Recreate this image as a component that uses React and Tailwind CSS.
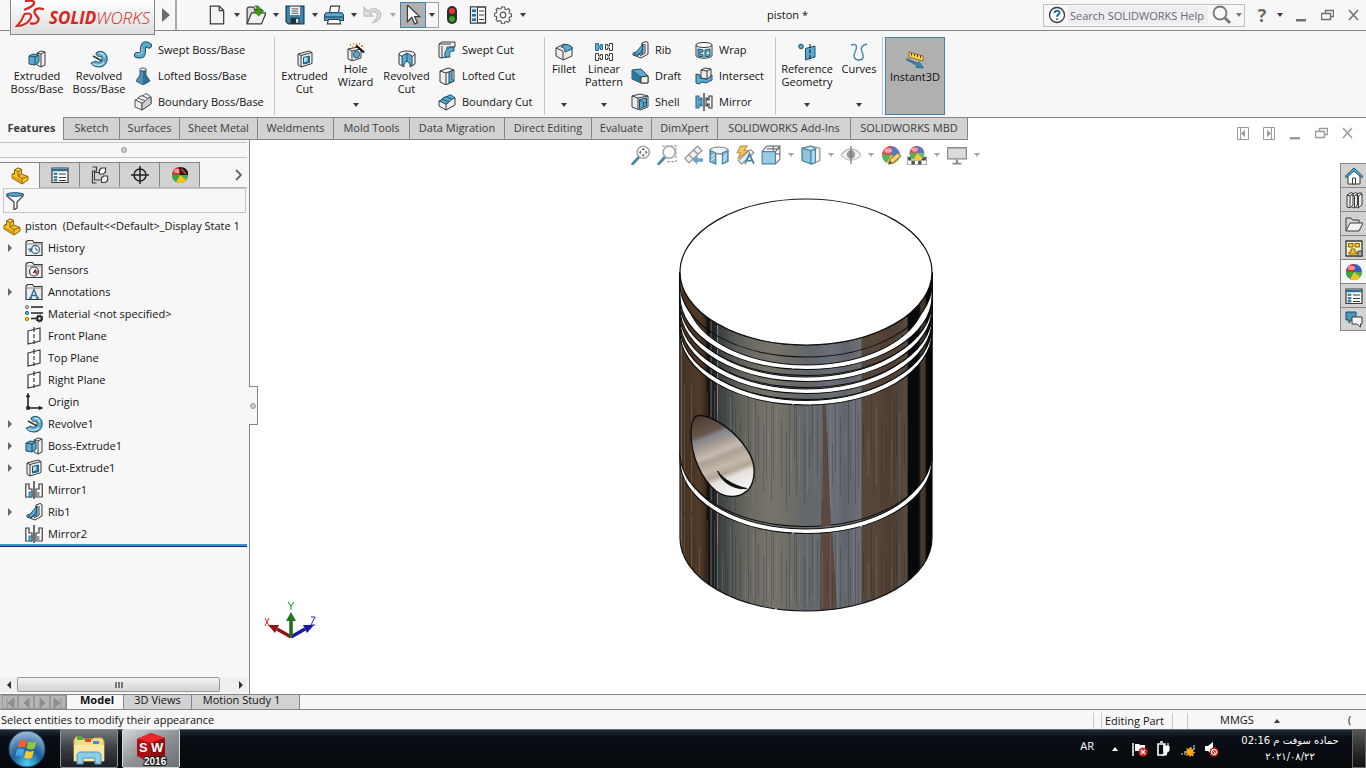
import React from "react";

const K = "#3a3a3a";
const B = "#5fa9cc";
const D = "#2a7196";

const cube = (
  <g stroke={K} strokeWidth="1" strokeLinejoin="round">
    <path d="M9 3l4-2 4 1v13l-4 2-4-2z" fill="#f2f2f2" />
    <path d="M13 4v13M13 4l4-2M13 4L9 3" fill="none" />
    <path d="M1 6l4-2 6 1v7l-4 3-6-1z" fill={B} stroke="#17506e" />
    <path d="M1 6l6 1v8M7 7l4-2" fill="none" stroke="#17506e" />
  </g>
);

const folder = (
  <g>
    <path d="M1 16.500V3l1.500-1.500h5L9 3.500h8v13z" fill="#ececec" stroke={K} strokeWidth="1.200" />
    <path d="M1 5h16" stroke="#888" />
  </g>
);

const sphere = (
  <g>
    <circle cx="9" cy="9" r="8" fill="#3a5fc0" />
    <path d="M9 9L9.5 1A8 8 0 0 0 1 8.5z" fill="#e02a26" />
    <path d="M9 9L1 8.500A8 8 0 0 0 5 16z" fill="#3aa63c" />
    <path d="M9 9l-4 7a8 8 0 0 0 10.500-2.300L17 9z" fill="#f3c31d" />
    <path d="M9 9h8a8 8 0 0 1-2 5z" fill="#4fae45" />
    <ellipse cx="6.500" cy="5" rx="3.500" ry="2.200" fill="#fff" opacity=".5" />
  </g>
);

const mirror = (
  <g fill="none" stroke={K} strokeWidth="1.200">
    <path d="M.8 3H4v5h3v8H.8z" fill="#fff" />
    <path d="M17.200 3H14v5h-3v8h6.200z" fill="#fff" />
    <path d="M4 11h3v5H4z" fill={B} stroke={D} strokeWidth="1" />
    <path d="M11.500 11h3v4.500h-3z" fill="#999" stroke="none" />
    <path d="M9 0v18" stroke="#111" />
  </g>
);

const mirrorCmd = (
  <g stroke={K} strokeWidth="1.100">
    <path d="M1 3h3v4h1.500V5H7v8H5.500v-2H4v4H1z" fill={B} stroke={D} />
    <path d="M17 3h-3v4h-1.500V5H11v8h1.500v-2H14v4h3z" fill="#eee" />
    <path d="M9 0v18" stroke="#111" />
  </g>
);

const rib = (
  <g strokeLinejoin="round">
    <path d="M11 2l4-1.500 2 1V13l-7 4-8-3v-2l8-2z" fill="#f0f0f0" stroke={K} />
    <path d="M14 3v9l-5 3" fill="none" stroke={K} />
    <path d="M12 3v9l-6 2.500-3-1z" fill={B} stroke="#17506e" />
    <path d="M12 3l-1 7-5 4.500" fill="none" stroke="#17506e" />
  </g>
);

const cutBox = (
  <g stroke={K} strokeLinejoin="round">
    <path d="M2 4l11-3 3 1.500v11L5 17l-3-2z" fill="#eee" />
    <path d="M5 5.500l11-3M5 5.500V17M2 4l3 1.500" fill="none" />
    <path d="M7.500 7.500l6-1.500v6.500l-6 1.500z" fill="#b9dcec" stroke="#17506e" />
    <path d="M11.500 6.500v4.500l-4 1.500 0 1.500 6-1.500V6z" fill={D} stroke="none" />
  </g>
);

const revolve = (
  <g strokeLinejoin="round">
    <path d="M6 3C10-.5 16 2 17 7c1 5-2 10-8 10-4 0-7-2-8-4l5-2c1 1 3 2 5 0 1.500-1.500 1-4 0-5-1.500 1.500-5 0-5-3z" fill={B} stroke="#17506e" />
    <path d="M9 3.500c3-1 5.500 1 5.500 4M3 13.500c3 2.500 8 2.500 11-1" fill="none" stroke="#c3e3f1" strokeWidth="1.300" />
    <path d="M3 6l9 5" stroke={K} strokeWidth="1.500" />
  </g>
);

const list = (
  <g stroke={K} fill="none">
    <path d="M1 2h16v14.500H1z" fill="#fafafa" strokeWidth="1.200" />
    <path d="M1 4h16" stroke={D} strokeWidth="2.500" />
    <path d="M3 7h3v1.500H3zM3 10.500h3V12H3zM3 13.500h3V15H3z" fill={B} stroke={D} strokeWidth=".8" />
    <path d="M8 8h7M8 11.500h7M8 14.500h7" strokeWidth="1.200" />
  </g>
);

const part = (
  <g strokeLinejoin="round" stroke="#8a6200">
    <path d="M3.500 3L7 1l3.500 1.500V7L17 9.500V13l-6 4L1 11V7.500L3.500 6z" fill="#f6c52c" />
    <path d="M3.500 3L7 1l3.500 1.500L7 4.500z" fill="#ffe27a" />
    <path d="M7 4.500V9l4 2.500L17 9.500M3.500 6v1L1 7.500M10.500 7L7 9M11 11.500V17" fill="none" />
    <path d="M1.500 8.500L10.500 13v3.200L1.500 10.800z" fill="#dca018" stroke="none" />
  </g>
);

const plane = (
  <g fill="none" stroke={K} strokeWidth="1.200">
    <path d="M3 4l12-3v13L3 17z" fill="#fff" />
    <path d="M9 0v5M9 7v4M9 13v4" />
  </g>
);

const magnifier = (
  <g>
    <path d="M7 11l-5.500 6" stroke={D} strokeWidth="2.600" strokeLinecap="round" />
    <circle cx="11" cy="6.500" r="5.500" fill="#f4f8fa" stroke="#8b9499" strokeWidth="1.300" />
  </g>
);

const I = {
  cube, mirror, mirrorCmd, rib, cutBox, revolve, list, part, plane, sphere,
  newDoc: (<path d="M3 1h8l4 4v12H3zM11 1v4h4" fill="#f4f4f4" stroke={K} strokeWidth="1.100" />),
  open: (
    <g strokeLinejoin="round">
      <path d="M1 17V3l1-1h5l1 2h6v4" fill="#ddd" stroke={K} strokeWidth="1.100" />
      <path d="M1 17L5 7h13l-4 10z" fill="#f0f0f0" stroke={K} strokeWidth="1.100" />
      <path d="M8 1c3-1 5 1 5 4h3l-4.500 5L7 5h3c0-2-.5-3-2-4z" fill="#3f9c12" stroke="#2b7508" strokeWidth=".6" />
    </g>
  ),
  save: (
    <g>
      <path d="M1 1h16v16H3l-2-2z" fill="#3c86ad" stroke="#1d4359" strokeWidth="1.200" />
      <path d="M4.500 1.500h9V9h-9z" fill="#f4f4f4" />
      <path d="M6 3.500h6M6 5.500h6M6 7.500h6" stroke="#777" />
      <path d="M5 11.500h8V17H5z" fill="#26323a" />
      <path d="M10 12.500h2V16h-2z" fill="#eee" />
    </g>
  ),
  print: (
    <g>
      <path d="M5 7L6 1h8l-1 6z" fill="#fff" stroke={K} />
      <path d="M2 7h14l1.500 2v5H.5V9z" fill="#5fa9cc" stroke="#1d4f69" />
      <path d="M1 10h16v2H1z" fill="#2a6a8c" />
      <path d="M4 13h10l1 4H3z" fill="#fff" stroke={K} />
    </g>
  ),
  undo: (<path d="M1 2v8h8L6 7c4-2.500 9 0 6 5l-3 4c7-2 9-8 5-11-3-2.500-7-2-10 .5z" fill="#dedede" stroke="#bdbdbd" />),
  cursor: (<path d="M4 0v15l4-4 2.500 6 2.500-1-2.500-5.500H15z" fill="#fff" stroke={K} strokeWidth="1.100" />),
  traffic: (
    <g>
      <rect x="4" y="0" width="10" height="18" rx="5" fill="#2d2d2d" />
      <circle cx="9" cy="5" r="3" fill="#e23b2b" />
      <circle cx="9" cy="13" r="3" fill="#38a328" />
    </g>
  ),
  options: (
    <g>
      <path d="M1.500 1h15v16h-15z" fill="#fff" stroke={K} strokeWidth="1.300" />
      <path d="M2 1.500h6.500v15H2z" fill="#d7e8f0" />
      <path d="M3 3.500h4v2.500H3zM3 8h4v2.500H3zM3 12.500h4V15H3z" fill={D} />
      <path d="M8.500 1v16M10 5h5M10 9h5M10 13.500h5" stroke={K} />
    </g>
  ),
  gear: (
    <g fill="none" stroke="#555">
      <path d="M7.500 1h3l.5 2 1.600.7L14.500 2.500l1.500 2-1 1.700.6 1.300 1.900.5v2.500l-2 .6-.6 1.500 1.100 1.800-1.800 1.900-1.900-1-1.400.6-.6 2H7.600L7 15.200l-1.500-.6-1.800 1L2 13.700l1-1.700-.6-1.500-2-.5V7.500l2-.6L3 5.400 2 3.600 3.800 2l1.700 1L7 2.700z" strokeWidth="1.100" />
      <circle cx="9" cy="9" r="2.800" strokeWidth="1.200" />
    </g>
  ),
  sweep: (
    <g fill="none" strokeLinecap="round">
      <path d="M3 14c7 2 6-2 6-6s2-6 6-3.500" stroke="#17506e" strokeWidth="6" />
      <path d="M3 14c7 2 6-2 6-6s2-6 6-3.500" stroke={B} strokeWidth="4.200" />
      <path d="M3 13c4 1 5-1 5-5" stroke="#a6d4e8" strokeWidth="1.200" />
    </g>
  ),
  loft: (
    <g stroke="#3d5666">
      <path d="M6 2v6L2 14l7 4 7-4-4-6V2z" fill="#4c93b8" />
      <path d="M9 3v15l7-4-4-6V2z" fill="#2f6f92" stroke="none" />
      <ellipse cx="9" cy="2.500" rx="3" ry="1.500" fill="#fff" />
    </g>
  ),
  boundary: (
    <g stroke="#555" fill="#ececec" strokeLinejoin="round">
      <path d="M1 7c3 0 3-4 6-4s4-3 6-2l4 3v7l-9 6-7-3z" />
      <path d="M1 7l7 3c3 0 3-4 9-6M8 10v7M4 5l7 3M8 2.500l6 3" fill="none" />
      <path d="M8 10c3 0 3-4 9-6v7l-9 6z" fill="#cfcfcf" />
    </g>
  ),
  boundaryCut: (
    <g strokeLinejoin="round">
      <path d="M1 8v5l7 4 9-5V5z" fill="#eee" stroke={K} />
      <path d="M1 8c3 0 3-4 6-4s4-3 6-2l4 3c-5 1-6 6-9 6z" fill={B} stroke="#17506e" />
      <path d="M4 6l7 3M8 3.500l6 3" stroke="#17506e" fill="none" />
      <path d="M8 11v6" stroke={K} />
    </g>
  ),
  hole: (
    <g strokeLinejoin="round">
      <path d="M1 6l10-2 3 2v9l-9 3-4-2z" fill="#eee" stroke={K} />
      <path d="M1 6l4 2v10M5 8l9-2" stroke={K} fill="none" />
      <ellipse cx="9.500" cy="11.500" rx="3" ry="3.500" fill={B} stroke="#17506e" />
      <path d="M9 2.500l8 7" stroke="#111" strokeWidth="2.200" />
      <path d="M3 2h1M6 0.500h1M9 1h1M12 0.500h1M14 3h2M5 4h1" stroke="#e8891c" strokeWidth="1.800" />
    </g>
  ),
  revCut: (
    <g stroke={K} strokeLinejoin="round">
      <path d="M1 4v10l5 3V7h6v10l5-3V4z" fill="#eee" />
      <ellipse cx="9" cy="4" rx="8" ry="3" fill="#f6f6f6" />
      <path d="M4 6l5-3 5 3v10l-5-5-5 5z" fill={B} stroke="#17506e" />
      <path d="M9 3v8" stroke="#17506e" />
    </g>
  ),
  sweptCut: (
    <g stroke={K} strokeLinejoin="round">
      <path d="M1 3l3-2h13v5H9v10l-6 1-2-1z" fill="#eee" />
      <path d="M1 3h12M4 5v12" fill="none" />
      <path d="M7 16c-1-6 2-10 9-10v4c-4 0-5 2-4 6z" fill={B} stroke="#17506e" />
    </g>
  ),
  loftCut: (
    <g stroke={K} strokeLinejoin="round">
      <path d="M2 4l8-3 6 2v11l-8 4-6-3z" fill="#eee" />
      <path d="M2 4l6 2v12M8 6l8-3" fill="none" />
      <path d="M11 5l3-1v8l2 2-5 2z" fill={B} stroke="#17506e" />
    </g>
  ),
  fillet: (
    <g stroke={K} strokeLinejoin="round">
      <path d="M1 5l8-4 8 3v9l-9 4-7-4z" fill="#eee" />
      <path d="M1 5l7 3v9" fill="none" />
      <path d="M6 4c3 0 4 2 4 5l7-3c0-2-1-3-3-4l-4-.5z" fill={B} stroke="#17506e" />
    </g>
  ),
  pattern: (
    <g fill="#fff" stroke={K} strokeWidth="1">
      <path d="M.5.500H3.500v2.500h2V1.500h2v5h-2V5h-2v2.500H.5z" fill={B} stroke={D} />
      <path d="M10.500 1.500h2V3h2V.5h3v7h-3V5h-2v1.500h-2z" />
      <path d="M.5 10.500h3V13h2v-1.500h2v5h-2V15h-2v2.500h-3z" />
      <path d="M10.500 11.500h2V13h2v-2.500h3v7h-3V15h-2v1.500h-2z" />
    </g>
  ),
  draft: (
    <g strokeLinejoin="round">
      <path d="M1 3l9-1 7 7v7H10L1 12z" fill={B} stroke="#17506e" />
      <path d="M1 3l9 7 7-1" fill="none" stroke="#17506e" />
      <path d="M1 3l9 7v6l-9-4z" fill="#2e7499" />
      <path d="M10 10l7-1v7h-7z" fill="#eee" stroke={K} />
    </g>
  ),
  shell: (
    <g stroke={K} strokeLinejoin="round">
      <path d="M1 3l8-2 8 2v11l-8 3-8-3z" fill="#eee" />
      <path d="M1 3l6 2v11.500M7 5l10-2" fill="none" />
      <path d="M8.500 6.500l7-1.500v8l-7 2.500z" fill={B} stroke="#17506e" />
      <path d="M8.500 6.500l4 3.500v4M12.500 10l3-1" fill="none" stroke="#17506e" />
    </g>
  ),
  wrap: (
    <g stroke={K}>
      <path d="M1 4v11c3 3 13 3 16 0V4z" fill="#eee" />
      <ellipse cx="9" cy="4" rx="8" ry="2.500" fill="#f8f8f8" />
      <path d="M3 8l5 1v2H5v2l3 .5v2.500l-5-1zM10 9l5-1v7l-5 1z" fill={B} stroke="#17506e" />
      <path d="M12 11h2v2h-2z" fill="#eee" stroke="none" />
    </g>
  ),
  intersect: (
    <g stroke={K} strokeLinejoin="round">
      <path d="M1 7l4 1v3l6 1 6-4v5l-6 3-4-1-3 2-3-1z" fill={B} stroke="#17506e" />
      <path d="M6 3l4-2 6 1v7l-4 3-6-1z" fill="#eee" />
      <path d="M6 3l6 1v8M12 4l4-2" fill="none" />
    </g>
  ),
  refGeo: (
    <g>
      <circle cx="3" cy="3.500" r="2.300" fill={B} stroke="#17506e" />
      <path d="M7.500 5.500L17 3v11l-9.500 3z" fill={B} stroke="#17506e" />
      <path d="M12 1v17" stroke="#111" strokeDasharray="4 1.500" />
    </g>
  ),
  curves: (<path d="M1 2c7-2 6 3 4 7s-1 8 4 8 5-4 3-8 0-7 5-8" fill="none" stroke="#3d87ad" strokeWidth="1.400" />),
  instant: (
    <g>
      <path d="M3 1l14 4v5L3 6z" fill="#ffd84a" stroke="#806000" strokeWidth=".8" />
      <path d="M5.500 2v2.500M8.500 2.800v2.500M11.500 3.600v2.500M14.500 4.500v2.500" stroke="#333" />
      <path d="M0 8.500l1-1 11 5 1-2 4.500 6.500-7.500-.5 1-2z" fill="#3d87ad" stroke="#17506e" strokeWidth=".6" />
    </g>
  ),
  config: (
    <g fill="#fff" stroke={K}>
      <path d="M1.500 1h4v4h-4v12h4" fill="none" strokeWidth="1.200" />
      <path d="M3.500 5v9h6M3.500 6.500h6" fill="none" />
      <path d="M8.500 4l2-2h4v4l-2 2h-4zM10.500 12l2-2h4v4.500l-2 2h-4z" strokeWidth="1.200" />
    </g>
  ),
  target: (
    <g fill="none" stroke="#222" strokeWidth="1.500">
      <circle cx="9" cy="9" r="6" />
      <path d="M9 0v18M0 9h18" />
    </g>
  ),
  display: (<g>{sphere}<path d="M9 9L8 1.500C13 0 18 4 17 9z" fill="#1a1a1a" /><path d="M10 3l5 5" stroke="#b04038" strokeWidth="2" /></g>),
  filter: (
    <g>
      <path d="M1 2h16v2l-6 6v6l-3 2v-8L1 4z" fill="#fff" stroke={K} strokeWidth="1.200" />
      <ellipse cx="9" cy="2.500" rx="8" ry="1.800" fill={B} stroke="#17506e" />
    </g>
  ),
  history: (<g>{folder}<circle cx="10.500" cy="10.500" r="4" fill="#fff" stroke={D} strokeWidth="1.300" /><path d="M10.500 8.500l1 2.500H13" fill="none" stroke={K} /><path d="M3 9.500h5L5.500 13.500z" fill={D} /></g>),
  sensors: (<g>{folder}<circle cx="9" cy="10.500" r="4.500" fill="#fff" stroke={K} strokeWidth="1.200" /><path d="M9 10.500l2.500 3.500 1.500-4z" fill="#d8322a" /><path d="M8.500 12l2.500-3.500" stroke="#222" strokeWidth="1.300" /></g>),
  annot: (<g>{folder}<path d="M5.500 15L9 6.500l3.500 8.500M7 12.500h4M4 15h3M11 15h3" fill="none" stroke={D} strokeWidth="1.400" /></g>),
  material: (
    <g>
      <circle cx="2" cy="2" r="1.500" fill="#fff" stroke="#555" />
      <circle cx="2" cy="8" r="1.700" fill={B} stroke={D} />
      <circle cx="2" cy="14" r="1.700" fill="#f3b81d" stroke="#b07d00" />
      <path d="M6 2h12M6 8h12M6 13.500h5" stroke="#222" strokeWidth="1.400" />
      <circle cx="14.500" cy="13.500" r="2.300" fill="none" stroke="#222" strokeWidth="2" />
      <circle cx="14.500" cy="13.500" r="3.600" fill="none" stroke="#222" strokeDasharray="1.400 1.400" />
    </g>
  ),
  origin: (
    <g stroke="#222" fill="#222">
      <path d="M3 3v12h12" fill="none" strokeWidth="1.600" />
      <path d="M3 0l1.800 4H1.200zM18 15l-4 1.800v-3.600zM1.500 13.500h3v3h-3z" strokeWidth=".5" />
    </g>
  ),
  zoomFit: (<g>{magnifier}<path d="M11 2.500L12.500 4.500h-3zM11 10.500L12.500 8.500h-3zM7 6.500L9 5v3zM15 6.500L13 5v3z" fill="#444" /></g>),
  zoomArea: (<g><path d="M5 1h12v14H9" fill="none" stroke="#777" strokeDasharray="2 1.500" />{magnifier}</g>),
  prevView: (
    <g>
      <path d="M1.500 12L13 1l4 4L5.500 16z" fill="#ececec" stroke="#777" strokeLinejoin="round" />
      <path d="M5 8.500l4 4M9.500 4.500l4 4" stroke="#777" />
      <path d="M18 12h-5V9.500l-4.500 4L13 17.500V15h5z" fill="#4f97bd" />
    </g>
  ),
  section: (
    <g stroke="#6a6a6a">
      <path d="M1 4c3-3 13-3 16 0v10l-4 1V8H6v9l-5-2z" fill="#f0f0f0" />
      <path d="M1 5l5 2v10l-5-2zM12 7l5-2v10l-5 2z" fill={B} stroke={D} />
      <path d="M2 11l3-3M2 14l3-3M13 12l3-4M13 15l3-4" stroke="#eaf5fa" />
    </g>
  ),
  dynAnnot: (
    <g>
      <path d="M5 1h6L8 5h4L3 12l2-5H2z" fill="#f9c046" stroke="#c07a1a" />
      <path d="M3 14L14 4l3 3L6 17z" fill="#ececec" stroke="#777" />
      <path d="M9 17l4-9 4 9M10.500 14h5" fill="none" stroke={D} strokeWidth="1.500" />
    </g>
  ),
  viewOrient: (
    <g>
      <path d="M5 1h12v12M1 6l4-5M13 6l4-5M11 1v5M5 3.500h12M17 8h-4M17 13l-4 4" fill="none" stroke="#555" />
      <path d="M1 6h12v11H1z" fill="#8cc4de" stroke={D} />
    </g>
  ),
  displayStyle: (
    <g strokeLinejoin="round">
      <path d="M1 3l8-2 8 2v11l-7 3-9-3z" fill="#f2f2f2" stroke="#777" />
      <path d="M1 3l8 2v12l-8-3z" fill="#7db9d6" stroke={D} />
      <path d="M9 5l4-1v12l-4 1z" fill="#a7d2e5" stroke={D} />
      <path d="M1 3l8-2 4.500 2.500L9 5z" fill="#c7e4f0" stroke={D} />
    </g>
  ),
  eye: (
    <g>
      <path d="M0 9c5-7 13-7 18 0-5 6-13 6-18 0z" fill="#f4f4f4" stroke="#aaa" />
      <circle cx="9" cy="8.500" r="3.800" fill="#888" />
      <path d="M9 1v16" stroke="#555" />
    </g>
  ),
  editApp: (<g>{sphere}<path d="M7 17l1-4 7-6 3 3-7 6z" fill="#f3cd65" stroke="#745a20" /><path d="M7 17l1-3 2 2z" fill="#333" /></g>),
  scene: (
    <g>
      <path d="M0 11h18v7H0z" fill="#fff" stroke="#555" />
      <path d="M1 11h3v3H1zM7 11h3v3H7zM13 11h4v3h-4zM4 14h3v3.500H4zM10 14h3v3.500h-3z" fill="#333" />
      <g transform="translate(1.500 0) scale(.83)">{sphere}</g>
    </g>
  ),
  monitor: (
    <g>
      <path d="M.5 2.500h17v10H.5z" fill="#d5d5d5" stroke="#777" strokeWidth="1.200" />
      <path d="M8 13h2v3h3v1.500H5V16h3z" fill="#777" />
    </g>
  ),
  home: (
    <g strokeLinejoin="round">
      <path d="M3 9l6-6 6 6v8H3z" fill="#fff" stroke={K} />
      <path d="M0 9.500L9 1l9 8.500-1.500 1.200L9 4l-7.500 6.700z" fill={B} stroke="#17506e" />
      <path d="M7.500 11h3v6h-3z" fill="#fff" stroke={K} />
    </g>
  ),
  library: (
    <g fill="#ececec" stroke={K} strokeLinejoin="round">
      <path d="M11 4l4-2.500 2 1V14l-4 3-2-1z" />
      <path d="M6.500 4l4-2.500 2 1V14l-3 3-3-1z" />
      <path d="M2 4l4-2.500 2 1V14l-3 3-3-1z" />
      <path d="M5 5v12M9.500 5v12M13.500 5v12M2 4l3 1 3-2.500M6.500 4l3 1 3-2.500M11 4l2.500 1L17 2.500" fill="none" />
    </g>
  ),
  folderOpen: (
    <g strokeLinejoin="round">
      <path d="M1 16V3h5l1.500 2H14v3" fill="#d5d5d5" stroke={K} />
      <path d="M1 16L5 8h13l-4 8z" fill="#f4f4f4" stroke={K} />
    </g>
  ),
  palette: (
    <g>
      <path d="M1 2h16v15H1z" fill="#f6f0d6" stroke={K} strokeWidth="1.300" />
      <path d="M3.500 4.500H8v3.500H3.500zM10 4.500h4.500V8H10zM6 10h4v3h2v2H4v-2h2z" fill="#f7c928" stroke="#8a6200" />
      <path d="M13 12h4v5h-4z" fill="#aaa" stroke={K} />
    </g>
  ),
  forum: (
    <g strokeLinejoin="round">
      <path d="M1 2h10v8H6l-2 3v-3H1z" fill="#4f97bd" stroke="#17506e" />
      <path d="M7 7h10v7h-1.500v3L12 14H7z" fill="#f6f6f6" stroke={K} />
    </g>
  ),
};

function Icon({ name, className = "size-[18px]" }) {
  return (
    <svg viewBox="0 0 18 18" className={`${className} shrink-0`} aria-hidden="true">
      {I[name]}
    </svg>
  );
}

function Down({ color = "#3a3a3a", up }) {
  return (
    <svg viewBox="0 0 6 4" className="h-1 w-1.5 shrink-0" aria-hidden="true">
      <path d={up ? "M0 4h6L3 0z" : "M0 0h6L3 4z"} fill={color} />
    </svg>
  );
}

function Big({ icon, lines, w, menu }) {
  return (
    <button className={`flex h-full flex-col items-center whitespace-nowrap leading-[13px] ${w} ${menu ? "pt-1.5" : "pt-[13px]"}`}>
      <Icon name={icon} />
      <span className="mt-px text-center">
        {lines.map((l) => (
          <span key={l} className="block">{l}</span>
        ))}
      </span>
      {menu && <span className="mt-auto mb-2"><Down /></span>}
    </button>
  );
}

function Column({ items, className }) {
  return (
    <div className={`flex flex-col ${className}`}>
      {items.map(([icon, label]) => (
        <button key={label} className="flex h-[26px] items-center gap-1.5 whitespace-nowrap">
          <Icon name={icon} />
          {label}
        </button>
      ))}
    </div>
  );
}

const WinIcon = {
  min: <path d="M1 10h10v2.500H1z" fill="currentColor" />,
  restore: <path d="M4.500 4.500v-3h8v6h-3M.5 4.500h9v6h-9z" fill="none" stroke="currentColor" strokeWidth="1.400" />,
  close: <path d="M2 1l9 10M11 1L2 11" fill="none" stroke="currentColor" strokeWidth="1.500" />,
  left: <g><path d="M.5.500h11v12H.5zM3.500 1v11" fill="none" stroke="currentColor" /><path d="M8 3v7L4 6.500z" fill="currentColor" /></g>,
  right: <g><path d="M.5.500h11v12H.5zM8.500 1v11" fill="none" stroke="currentColor" /><path d="M4 3v7l4-3.500z" fill="currentColor" /></g>,
};

function WinButton({ kind, label }) {
  return (
    <button aria-label={label} className="flex w-[26px] justify-center">
      <svg viewBox="0 0 13 13" className="size-[13px]">{WinIcon[kind]}</svg>
    </button>
  );
}

const fileTools = [
  ["newDoc", "New"],
  ["open", "Open"],
  ["save", "Save"],
  ["print", "Print"],
  ["undo", "Undo"],
];

function TitleBar() {
  return (
    <header className="relative flex h-[31px] shrink-0 items-center border-b border-[#868686] bg-[#f7f7f7]">
      <div className="absolute left-2.5 top-0 z-10 flex h-[35px] w-[145px] items-center border border-t-0 border-[#868686] bg-linear-to-b from-white to-[#dedede] text-[#d6261c]">
        <svg viewBox="0 0 30 30" className="mb-2 ml-1 size-[30px] shrink-0" aria-hidden="true">
          <g fill="none" stroke="#d6261c" strokeLinecap="round">
            <path d="M11 3c5-1 9 0 8 2.500S14 10 10 11.500" strokeWidth="2.200" />
            <path d="M2 28C6 24 8 20 9.500 16c5-1.500 8 0 6 4.500C13.500 25 8 28 2 28z" strokeWidth="2" />
            <path d="M28 11c-5-1.500-8.500 0-8.500 3 0 4 5 4.500 4 8-1 3-4 4-7.500 3.500" strokeWidth="2.300" />
          </g>
        </svg>
        <span className="ml-1 text-[17px] leading-none font-light italic whitespace-nowrap"><b className="font-bold">SOLID</b>WORKS</span>
      </div>
      <button aria-label="Expand menu" className="ml-[156px] flex h-[30px] w-[21px] items-center justify-center border-r-2 border-[#a8a8a8]">
        <svg viewBox="0 0 8 14" className="h-3.5 w-2"><path d="M0 0v14l8-7z" fill="#6b6b6b" /></svg>
      </button>
      <div className="ml-7 flex items-center">
        {fileTools.map(([icon, label]) => (
          <React.Fragment key={icon}>
            <button aria-label={label} className="flex w-6 justify-center"><Icon name={icon} className="size-5" /></button>
            <button aria-label={`${label} options`} className="flex w-[15px] justify-center"><Down color={icon === "undo" ? "#aaa" : "#3a3a3a"} /></button>
          </React.Fragment>
        ))}
        <button aria-label="Select" className="flex h-[26px] w-[26px] items-center justify-center border border-[#3d87ad] bg-[#b0b0b0]"><Icon name="cursor" className="size-5" /></button>
        <button aria-label="Select options" className="flex h-[26px] w-[13px] items-center justify-center border border-l-0 border-[#a0a0a0]"><Down /></button>
        <button aria-label="Rebuild" className="flex w-[26px] justify-center"><Icon name="traffic" /></button>
        <button aria-label="File properties" className="flex w-[26px] justify-center"><Icon name="options" /></button>
        <button aria-label="Options" className="flex w-6 justify-center"><Icon name="gear" /></button>
        <button aria-label="More options" className="flex w-[15px] justify-center"><Down /></button>
      </div>
      <h1 className="flex-1 pl-0.5 text-center">piston *</h1>
      <div className="flex h-[23px] w-[202px] items-center border border-[#bdbdbd] pl-1">
        <svg viewBox="0 0 18 18" className="size-[18px] shrink-0" aria-hidden="true">
          <circle cx="9" cy="9" r="7.500" fill="#fff" stroke="#333" strokeWidth="1.300" />
          <path d="M6.500 7c0-3 5-3 5-.3 0 2-2.500 1.800-2.500 4M9 12.500v1.500" fill="none" stroke="#2a7196" strokeWidth="2" />
        </svg>
        <input aria-label="Search SOLIDWORKS Help" placeholder="Search SOLIDWORKS Help" className="ml-0.5 h-[18px] w-[140px] bg-[#ededf2] pl-0.5 outline-none placeholder:text-[#6a6a6a]" />
        <svg viewBox="0 0 20 20" className="ml-1 size-5 shrink-0" aria-hidden="true">
          <circle cx="8" cy="8" r="6.500" fill="none" stroke="#777" strokeWidth="1.800" />
          <path d="M13 13l5 5" stroke="#777" strokeWidth="3" />
        </svg>
        <span className="ml-1"><Down color="#777" /></span>
      </div>
      <button aria-label="Help" className="ml-2 w-[18px] text-[18px] leading-none font-bold text-[#6b6b6b]">?</button>
      <button aria-label="Help options" className="flex w-[17px] justify-center"><Down /></button>
      <div className="flex text-[#6f6f6f]">
        <WinButton kind="min" label="Minimize" />
        <WinButton kind="restore" label="Restore" />
        <WinButton kind="close" label="Close" />
      </div>
    </header>
  );
}

function Ribbon() {
  return (
    <div className="flex h-[86px] shrink-0 bg-[#f7f7f7] pt-1.5 pb-0.5 [&>*]:shrink-0">
      <div className="flex w-[274px] pl-1.5">
        <Big icon="cube" lines={["Extruded", "Boss/Base"]} w="w-[62px]" />
        <Big icon="revolve" lines={["Revolved", "Boss/Base"]} w="w-[62px]" />
        <Column className="pl-1" items={[["sweep", "Swept Boss/Base"], ["loft", "Lofted Boss/Base"], ["boundary", "Boundary Boss/Base"]]} />
      </div>
      <div className="flex w-[270px] border-l border-[#c4c4c4] pl-1">
        <Big icon="cutBox" lines={["Extruded", "Cut"]} w="w-[51px]" />
        <Big icon="hole" lines={["Hole", "Wizard"]} w="w-[51px]" menu />
        <Big icon="revCut" lines={["Revolved", "Cut"]} w="w-[51px]" />
        <Column className="pl-1.5" items={[["sweptCut", "Swept Cut"], ["loftCut", "Lofted Cut"], ["boundaryCut", "Boundary Cut"]]} />
      </div>
      <div className="flex w-[231px] border-l border-[#c4c4c4]">
        <Big icon="fillet" lines={["Fillet"]} w="w-[38px]" menu />
        <Big icon="pattern" lines={["Linear", "Pattern"]} w="w-[42px]" menu />
        <Column className="w-16 pl-1.5" items={[["rib", "Rib"], ["draft", "Draft"], ["shell", "Shell"]]} />
        <Column className="pl-1.5" items={[["wrap", "Wrap"], ["intersect", "Intersect"], ["mirrorCmd", "Mirror"]]} />
      </div>
      <div className="flex w-[108px] border-x border-[#c4c4c4]">
        <Big icon="refGeo" lines={["Reference", "Geometry"]} w="w-[62px]" menu />
        <Big icon="curves" lines={["Curves"]} w="w-[42px]" menu />
      </div>
      <div className="ml-0.5 border border-[#3d87ad] bg-[#b0b0b0]">
        <Big icon="instant" lines={["Instant3D"]} w="w-[58px]" />
      </div>
    </div>
  );
}

const tabs = [
  ["Features", "w-16"],
  ["Sketch", "w-14"],
  ["Surfaces", "w-[60px]"],
  ["Sheet Metal", "w-[78px]"],
  ["Weldments", "w-[76px]"],
  ["Mold Tools", "w-[76px]"],
  ["Data Migration", "w-[95px]"],
  ["Direct Editing", "w-[87px]"],
  ["Evaluate", "w-[60px]"],
  ["DimXpert", "w-[66px]"],
  ["SOLIDWORKS Add-Ins", "w-[133px]"],
  ["SOLIDWORKS MBD", "w-[117px]"],
];

function RibbonTabs() {
  return (
    <nav className="flex h-[23px] shrink-0 bg-white">
      {tabs.map(([label, w], i) => (
        <button
          key={label}
          className={`${w} shrink-0 whitespace-nowrap border-r border-[#868686] text-[#3c3c3c] ${i === 0 ? "bg-[#f7f7f7] font-bold" : "border-y bg-[#d2d2d2]"}`}
        >
          {label}
        </button>
      ))}
      <div className="flex flex-1 items-end justify-end border-t border-[#868686] pr-1.5 text-[#9b9b9b]">
        <WinButton kind="left" label="Collapse left" />
        <WinButton kind="right" label="Collapse right" />
        <WinButton kind="min" label="Minimize document" />
        <WinButton kind="restore" label="Restore document" />
        <WinButton kind="close" label="Close document" />
      </div>
    </nav>
  );
}

const tree = [
  ["history", "History", true],
  ["sensors", "Sensors"],
  ["annot", "Annotations", true],
  ["material", "Material <not specified>"],
  ["plane", "Front Plane"],
  ["plane", "Top Plane"],
  ["plane", "Right Plane"],
  ["origin", "Origin"],
  ["revolve", "Revolve1", true],
  ["cube", "Boss-Extrude1", true],
  ["cutBox", "Cut-Extrude1", true],
  ["mirror", "Mirror1"],
  ["rib", "Rib1", true],
  ["mirror", "Mirror2"],
];

const Dot = () => <span className="size-1.5 rounded-full border border-[#999] bg-[#ccc]" />;

function SidePanel() {
  return (
    <aside className="relative flex w-[250px] shrink-0 flex-col border-r border-[#868686] bg-[#f7f7f7]">
      <div className="mt-0.5 flex h-4 w-[247px] items-center justify-center border-y border-[#c4c4c4]"><Dot /></div>
      <div className="mt-1 flex h-[26px] w-[247px] border-b border-[#b5b5b5]">
        {["part", "list", "config", "target", "display"].map((n, i) => (
          <button
            key={n}
            aria-label={["Feature tree", "Properties", "Configurations", "DimXpert", "Appearances"][i]}
            className={`flex w-10 items-center justify-center border-t border-r border-[#868686] ${i === 0 ? "-mb-px bg-[#f7f7f7]" : "bg-[#d2d2d2]"}`}
          >
            <Icon name={n} />
          </button>
        ))}
        <button aria-label="More tabs" className="ml-auto pr-1">
          <svg viewBox="0 0 8 12" className="h-3 w-2"><path d="M1 1l5 5-5 5" fill="none" stroke="#666" strokeWidth="1.800" /></svg>
        </button>
      </div>
      <label className="mx-[3px] flex h-[25px] w-[243px] items-center border border-[#c4c4c4] pl-0.5">
        <Icon name="filter" />
        <input aria-label="Filter tree" className="w-full bg-transparent outline-none" />
      </label>
      <div className="w-[247px] overflow-hidden">
        <div className="flex h-[23px] items-center gap-1 pt-1 pl-[3px] whitespace-pre"><Icon name="part" />piston  (Default&lt;&lt;Default&gt;_Display State 1</div>
        <ul>
          {tree.map(([icon, label, open]) => (
            <li key={label} className="flex h-[22px] items-center pt-0.5 whitespace-nowrap">
              <span className="flex w-[25px] shrink-0 pl-2">
                {open && <svg viewBox="0 0 4 8" className="h-2 w-1"><path d="M0 0v8l4-4z" fill="#666" /></svg>}
              </span>
              <Icon name={icon} />
              <span className="ml-[5px]">{label}</span>
            </li>
          ))}
        </ul>
        <div className="h-[3px] border-b border-[#1c1c98] bg-[#3a94c6]" />
      </div>
      <div className="mt-auto mb-0.5 flex h-[15px] w-[247px] items-center bg-[#efefef]">
        <button aria-label="Scroll left" className="flex w-[17px] justify-center"><svg viewBox="0 0 4 8" className="h-2 w-1"><path d="M4 0v8L0 4z" fill="#333" /></svg></button>
        <div className="flex h-full w-[203px] items-center justify-center gap-px rounded-xs border border-[#979797] bg-linear-to-b from-[#f5f5f5] to-[#d2d2d2]">
          {[0, 1, 2].map((i) => <span key={i} className="h-1.5 w-0.5 bg-[#777]" />)}
        </div>
        <button aria-label="Scroll right" className="ml-auto flex w-3 justify-center"><svg viewBox="0 0 4 8" className="h-2 w-1"><path d="M0 0v8l4-4z" fill="#333" /></svg></button>
      </div>
      <button aria-label="Collapse panel" className="absolute top-[246px] -right-[9px] z-10 flex h-[39px] w-[9px] items-center justify-center border border-l-0 border-[#868686] bg-[#f7f7f7]"><Dot /></button>
    </aside>
  );
}

const metal = [
  [680, "#777"], [681.5, "#6a625c"], [682, "#49321f"], [700, "#503a2a"], [706, "#3d2a1d"], [707, "#15100c"], [710, "#1a1512"],
  [711, "#5b5e5d"], [712.5, "#1c2020"], [717, "#272c2b"], [717.6, "#8d9190"], [718.5, "#3b403f"], [725, "#454a48"], [735, "#595b57"],
  [748, "#696861"], [770, "#77746b"], [790, "#6f6d68"], [800, "#67686a"], [812, "#62676d"], [822, "#666b72"], [832, "#6b7078"],
  [845, "#61656b"], [861, "#6c7077"], [862, "#52463b"], [878, "#554537"], [885, "#533f35"], [895, "#4e4135"], [907, "#584a3d"],
  [908.5, "#06090d"], [918, "#05070b"], [919.5, "#1a1512"], [921, "#4a3b2f"], [925, "#45362b"], [926.5, "#0a0a0a"], [932, "#020202"],
];

const grain = Array.from({ length: 70 }, (_, i) => ({
  x: 684.5 + ((i * 41) % 223),
  y: (i * 61) % 60,
  h: (i * 47) % 60,
  c: i % 3 ? "#1c1e22" : "#a5a39a",
}));

const body = (top, bottom) => `M680 ${top}V${bottom}A126 73 0 0 0 932 ${bottom}V${top}A126 73 0 0 1 680 ${top}Z`;

const grooves = [
  { c: 460.5, u: 453.5, r: 121, q: 68.5 },
  { c: 332, u: 326.5, r: 120, q: 68.5 },
  { c: 320.5, u: 314.5, r: 120, q: 68.5 },
  { c: 308.5, u: 302.5, r: 120, q: 68.5 },
  { c: 296.5, u: 284, r: 119, q: 68.5 },
];

function Piston() {
  return (
    <svg viewBox="679 198 255 415" className="h-[415px] w-[255px]" role="img" aria-label="Piston model">
      <defs>
        <linearGradient id="metal" gradientUnits="userSpaceOnUse" x1="680" y1="0" x2="932" y2="0">
          {metal.map(([x, c]) => <stop key={x} offset={(x - 680) / 252} stopColor={c} />)}
        </linearGradient>
        <linearGradient id="bore" gradientUnits="userSpaceOnUse" x1="704" y1="412" x2="738" y2="498">
          <stop offset="0" stopColor="#4a382e" /><stop offset=".22" stopColor="#67564b" /><stop offset=".27" stopColor="#84868b" />
          <stop offset=".36" stopColor="#a49b94" /><stop offset=".46" stopColor="#c6bbb0" /><stop offset=".52" stopColor="#aca196" />
          <stop offset=".62" stopColor="#c4b9ab" /><stop offset=".7" stopColor="#b0a699" /><stop offset=".76" stopColor="#e4e1dd" /><stop offset="1" stopColor="#fff" />
        </linearGradient>
        <clipPath id="shape"><path d={body(272, 538)} /></clipPath>
      </defs>
      <path d={body(272, 538)} fill="url(#metal)" />
      <g clipPath="url(#shape)">
        <path d="M820.500 525H832l5 87H820z" fill="#5b483f" />
        {grain.map((g) => <path key={g.x} d={`M${g.x} ${515 + g.y}V${612 - g.h / 3}`} stroke={g.c} strokeWidth=".8" opacity=".28" />)}
      </g>
      <path d="M680 272V538A126 73 0 0 0 932 538V272" fill="none" stroke="#111" strokeWidth="1.200" />
      {grooves.map((g, i) => (
        <g key={g.c} stroke="#0d0d0d" strokeWidth="1.100">
          <path d={`M680 ${g.u}V${g.c}A126 73 0 0 0 932 ${g.c}V${g.u}Z`} fill="#fff" />
          <path d={`M${806 - g.r} ${g.u}V${g.c}A${g.r} ${g.q} 0 0 0 ${806 + g.r} ${g.c}V${g.u}Z`} fill="url(#metal)" strokeWidth="1" />
          <path d={body(272, g.u)} fill="url(#metal)" />
          {i === 0 && (
            <g clipPath="url(#shape)" stroke="none">
              <path d="M822.500 400h3l5.500 126h-10z" fill="#5b483f" />
              {grain.map((l) => <path key={l.x} d={`M${l.x} ${385 + l.y}V${512 - l.h}`} stroke={l.c} strokeWidth=".8" opacity=".28" />)}
            </g>
          )}
        </g>
      ))}
      <path d="M776 340v3M810 342v3M793 366v3M844 363v3M793 402v3M810 402v3M744 520v3M793 531v3M861 524v3M776 608v3" fill="none" stroke="#fff" strokeWidth=".9" />
      <path d="M700 415.500C713 416 736 431 748 451 757 465 755 481 749 489 741 498 727 499 716 491 701 479 691 455 691 434 691 421 694 415 700 415.500Z" fill="url(#bore)" stroke="#111" strokeWidth="1.400" />
      <path d="M717.500 471C724 480 735 486 747 488.500 735 490 722 483 717.500 471Z" fill="#111" stroke="#111" />
      <ellipse cx="806" cy="272" rx="126" ry="73" fill="#fff" stroke="#111" strokeWidth="1.200" />
    </svg>
  );
}

const views = [
  ["zoomFit", "Zoom to fit"], ["zoomArea", "Zoom to area"], ["prevView", "Previous view"], ["section", "Section view"],
  ["dynAnnot", "Annotation views"], ["viewOrient", "View orientation", true], ["displayStyle", "Display style", true],
  ["eye", "Hide or show items", true], ["editApp", "Edit appearance"], ["scene", "Apply scene", true], ["monitor", "View settings", true],
];

function Viewport() {
  return (
    <main className="relative flex min-w-0 flex-1 flex-col items-center overflow-hidden bg-white pt-[5px] pr-1">
      <div className="flex h-5 items-center opacity-85">
        {views.map(([n, label, menu]) => (
          <React.Fragment key={n}>
            <button aria-label={label} className="flex w-[26px] justify-center"><Icon name={n} className="size-5" /></button>
            {menu && <button aria-label={`${label} options`} className="flex w-3.5 justify-center"><Down color="#999" /></button>}
          </React.Fragment>
        ))}
      </div>
      <div className="mt-[33px]"><Piston /></div>
      <svg viewBox="0 0 56 40" className="absolute bottom-[54px] left-[13px] h-10 w-14" role="img" aria-label="Axes">
        <path d="M28 37L14 29" stroke="#8e1616" strokeWidth="3.500" /><path d="M5 25l11 0-4 8z" fill="#8e1616" />
        <path d="M28 37l14-8" stroke="#1a1aa0" strokeWidth="3.500" /><path d="M51 25l-11 0 4 8z" fill="#1a1aa0" />
        <path d="M28 37V20" stroke="#1c6a1c" strokeWidth="3.500" /><path d="M28 12l5 9H23z" fill="#1c7a1c" />
        <path d="M25 2l3 4 3-4M28 6v4" fill="none" stroke="#0a8a0a" />
        <path d="M2 18l4 8M6 18l-4 8" stroke="#e02020" />
        <path d="M48 17h4l-4 8h4" fill="none" stroke="#2020e0" />
      </svg>
      <nav className="absolute top-[23px] right-0 flex w-[26px] flex-col border-l border-[#868686]">
        {["home", "library", "folderOpen", "palette", "sphere", "list", "forum"].map((n, i) => (
          <button
            key={n}
            aria-label={["Resources", "Design library", "File explorer", "View palette", "Appearances", "Custom properties", "Forum"][i]}
            className={`flex h-6 items-center justify-center border-t border-[#868686] last:border-b ${n === "sphere" ? "bg-[#f7f7f7]" : "bg-[#d2d2d2]"}`}
          >
            <Icon name={n} />
          </button>
        ))}
      </nav>
    </main>
  );
}

function BottomTabs() {
  return (
    <div className="flex h-4 shrink-0 border-y border-[#868686] bg-[#f7f7f7] leading-[10px]">
      <div className="flex w-[67px] shrink-0 border-r border-[#868686] bg-[#b5b5b5] pl-0.5">
        {["M4 2v10M11 2L5 7l6 5z", "M10 2L5 7l5 5z", "M5 2l5 5-5 5z", "M10 2v10M3 2l6 5-6 5z"].map((d, i) => (
          <button key={d} aria-label={["First", "Previous", "Next", "Last"][i]} className="w-4 border border-[#999]">
            <svg viewBox="0 0 14 14" className="size-3.5"><path d={d} fill="#8f8f8f" stroke="#8f8f8f" /></svg>
          </button>
        ))}
      </div>
      <button className="w-14 pb-1 pl-1 font-bold">Model</button>
      <button className="w-[69px] border-x border-[#868686] bg-[#d2d2d2] pb-1">3D Views</button>
      <button className="w-[108px] border-r border-[#868686] bg-[#d2d2d2] pr-2 pb-1 whitespace-nowrap">Motion Study 1</button>
    </div>
  );
}

function StatusBar() {
  return (
    <footer className="flex h-[19px] shrink-0 items-center bg-[#f7f7f7] pt-0.5 pl-px whitespace-nowrap">
      <span className="flex-1">Select entities to modify their appearance</span>
      <span className="h-4 w-2 border-l border-[#c9c9c9]" />
      <span className="h-4 w-[72px] border-x border-[#c9c9c9] pl-[3px] leading-4">Editing Part</span>
      <span className="h-4 w-[15px] border-r border-[#c9c9c9]" />
      <button className="flex w-40 items-center gap-5 pl-8 text-left">MMGS <Down up /></button>
      <span className="w-[18px] overflow-hidden">(</span>
    </footer>
  );
}

function Taskbar() {
  return (
    <div className="flex h-[39px] shrink-0 items-stretch bg-linear-to-b from-[#26313d] via-[#0b1016] via-20% to-[#05080b] text-white shadow-[inset_0_1px_0_#5e6b78]">
      <button aria-label="Start" className="ml-2 flex w-[38px] items-center justify-center">
        <svg viewBox="0 0 38 38" className="size-[38px]">
          <defs>
            <radialGradient id="orb" cx=".5" cy=".9" r=".9"><stop offset="0" stopColor="#4fd0f5" /><stop offset=".45" stopColor="#1a5c96" /><stop offset="1" stopColor="#9fc0dc" /></radialGradient>
          </defs>
          <circle cx="19" cy="19" r="18" fill="url(#orb)" stroke="#244a6c" />
          <path d="M12 11c3-2 5-1 7 0l-2 7c-2-1.500-5-1.500-7.500 0z" fill="#f0602c" />
          <path d="M20.500 11.500c3 1.500 5 1.500 8-.5l-2 7.500c-2.500 1.500-5 1.500-8 0z" fill="#93c83e" />
          <path d="M9 19.500c2.500-1.500 5-1 7.500 0l-2 7c-2-1.500-5-1.500-7.500 0z" fill="#3fa6e8" />
          <path d="M18 20.500c3 1.500 5 1.500 8 0l-2 7c-3 1.500-5.500 1.500-8 0z" fill="#fcc62e" />
        </svg>
      </button>
      <button aria-label="Explorer" className="ml-3.5 flex w-[58px] items-center justify-center rounded-xs border border-[#8a8f94] bg-linear-to-b from-[#777b7f] via-[#3a3e42] to-[#1c2024]">
        <svg viewBox="0 0 34 32" className="h-8 w-[34px]">
          <path d="M2 7l2-3h6l1 2h10l1-1h8l2 3v20H2z" fill="#f2dc86" stroke="#c9a94b" />
          <path d="M5 4h6v3H5z" fill="#3fb13a" /><path d="M13 6h6v3h-6z" fill="#d84a2b" /><path d="M21 8h6v3h-6z" fill="#3f8fd0" />
          <path d="M2 12h30v16H2z" fill="#f7e8a4" />
          <path d="M5 31V22c0-2 2-3 4-3h16c2 0 4 1 4 3v9h-6v-6H11v6z" fill="#8fcdea" stroke="#4c96bf" />
        </svg>
      </button>
      <button aria-label="SOLIDWORKS 2016" className="ml-1 flex w-[58px] items-center justify-center rounded-xs border border-[#d5d7d9] bg-linear-to-br from-[#d5d7d9] via-[#8f9396] to-[#6d7175]">
        <svg viewBox="0 0 34 34" className="size-[34px]">
          <path d="M3 7l14-6 14 5v17l-14 8L3 24z" fill="#a90f14" />
          <path d="M3 7l14-6 14 5-14 5z" fill="#e8252a" />
          <path d="M17 11l14-5v17l-14 8z" fill="#8e0c10" />
          <g fill="#fff" fontFamily="Liberation Sans, sans-serif" fontWeight="700">
            <text x="5" y="20" fontSize="13">S</text>
            <text x="17" y="20" fontSize="13">W</text>
            <text x="10" y="33" fontSize="10" stroke="#111" strokeWidth="2" paintOrder="stroke">2016</text>
          </g>
        </svg>
      </button>
      <div className="ml-auto flex items-center">
        <span className="mb-1">AR</span>
        <button aria-label="Show hidden icons" className="ml-[18px]"><Down up color="#fff" /></button>
        <svg viewBox="0 0 88 16" className="ml-3.5 h-4 w-[88px]" role="img" aria-label="Tray icons">
          <path d="M1 2v13" stroke="#fff" strokeWidth="1.500" /><path d="M3 3h4l1 1h5v6H3z" fill="#fff" />
          <circle cx="11" cy="11" r="4.500" fill="#d8261f" /><path d="M9 9l4 4M13 9l-4 4" stroke="#fff" strokeWidth="1.300" />
          <path d="M26 3h6v11h-6zM28 1h3" fill="none" stroke="#fff" strokeWidth="1.600" /><path d="M32 5h5v4c0 3-5 3-5 0zM33 2v3M36 2v3M34.500 10v4h-4" fill="#fff" stroke="#fff" />
          <path d="M49 12h2v2h-2zM52 10h2v4h-2zM58 6h2v4h-2zM61 4h2v5h-2z" fill="#777" />
          <path d="M58 6l1.300 2.500 2.700-1-1 2.700 2.500 1.300-2.500 1.300 1 2.700-2.700-1L58 16l-1.300-2-2.700 1 1-2.700-2.500-1.300 2.500-1.300-1-2.700 2.700 1z" fill="#f5a81c" />
          <path d="M73 5h3l5-4v13l-5-4h-3z" fill="#fff" />
          <circle cx="82" cy="11" r="4.500" fill="#d8261f" /><circle cx="82" cy="11" r="2.600" fill="none" stroke="#fff" /><path d="M80 9l4 4" stroke="#fff" />
        </svg>
        <div dir="rtl" lang="ar" className="ml-4 w-[108px] text-center font-['DejaVu_Sans',sans-serif] text-[10px] leading-4 whitespace-nowrap">
          <div>حماده سوفت م 02:16</div>
          <div>٢٠٢١/٠٨/٢٢</div>
        </div>
        <button aria-label="Show desktop" className="ml-2 h-full w-3.5 border border-[#666] bg-linear-to-b from-[#555] to-[#111]" />
      </div>
    </div>
  );
}

export default function App() {
  return (
    <div className="flex h-screen flex-col overflow-hidden bg-[#f7f7f7] font-['Open_Sans',sans-serif] text-[11px] text-[#111]">
      <TitleBar />
      <Ribbon />
      <RibbonTabs />
      <div className="flex min-h-0 flex-1">
        <SidePanel />
        <Viewport />
      </div>
      <BottomTabs />
      <StatusBar />
      <Taskbar />
    </div>
  );
}
